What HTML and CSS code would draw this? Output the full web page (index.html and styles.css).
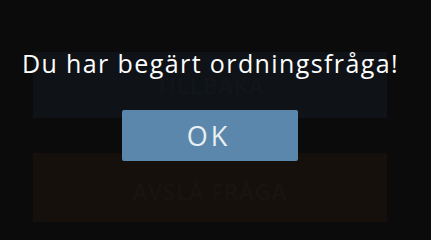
FILE: index.html
```html
<!DOCTYPE html>
<html lang="sv">
<head>
<meta charset="utf-8">
<title>Ordningsfråga</title>
<link rel="stylesheet" href="styles.css">
</head>
<body>
<main class="screen">
  <div class="actions">
    <button class="action action-back">TILLBAKA</button>
    <button class="action action-decline">AVSLÅ FRÅGA</button>
  </div>
  <div class="overlay">
    <div class="dialog">
      <p class="dialog-message">Du har begärt ordningsfråga!</p>
      <button class="dialog-ok">OK</button>
    </div>
  </div>
</main>
</body>
</html>
```
FILE: styles.css
```css
* { box-sizing: border-box; }
html, body {
  margin: 0;
  padding: 0;
  width: 431px;
  height: 222px;
  overflow: hidden;
  background: #0b0b0b;
}
.screen {
  position: relative;
  width: 431px;
  height: 222px;
  font-family: "Open Sans", "DejaVu Sans", sans-serif;
}
.actions {
  display: flex;
  flex-direction: column;
  gap: 35px;
  padding: 52px 44px 0 33px;
}
.action {
  display: flex;
  align-items: center;
  justify-content: center;
  border: 0;
  margin: 0;
  width: 354px;
  height: 66px;
  font-family: inherit;
  font-size: 22px;
  font-weight: 600;
  letter-spacing: 1px;
}
.action-back {
  background: #0f1317;
  color: #12161a;
}
.action-decline {
  height: 76px;
  background: #15100c;
  color: #19140e;
}
.overlay {
  position: absolute;
  inset: 0;
  display: flex;
  justify-content: center;
  padding: 46px 10px 0 0;
}
.dialog {
  display: flex;
  flex-direction: column;
  align-items: center;
}
.dialog-message {
  margin: 0;
  color: #ffffff;
  font-size: 25px;
  line-height: 34px;
  letter-spacing: 1.4px;
  white-space: nowrap;
}
.dialog-ok {
  margin-top: 30px;
  width: 176px;
  height: 51px;
  border: 0;
  border-radius: 2px;
  background: #5a87ab;
  color: #e9eff3;
  font-family: inherit;
  font-size: 27px;
  letter-spacing: 3px;
  padding: 0 4px 0 0;
}
```
